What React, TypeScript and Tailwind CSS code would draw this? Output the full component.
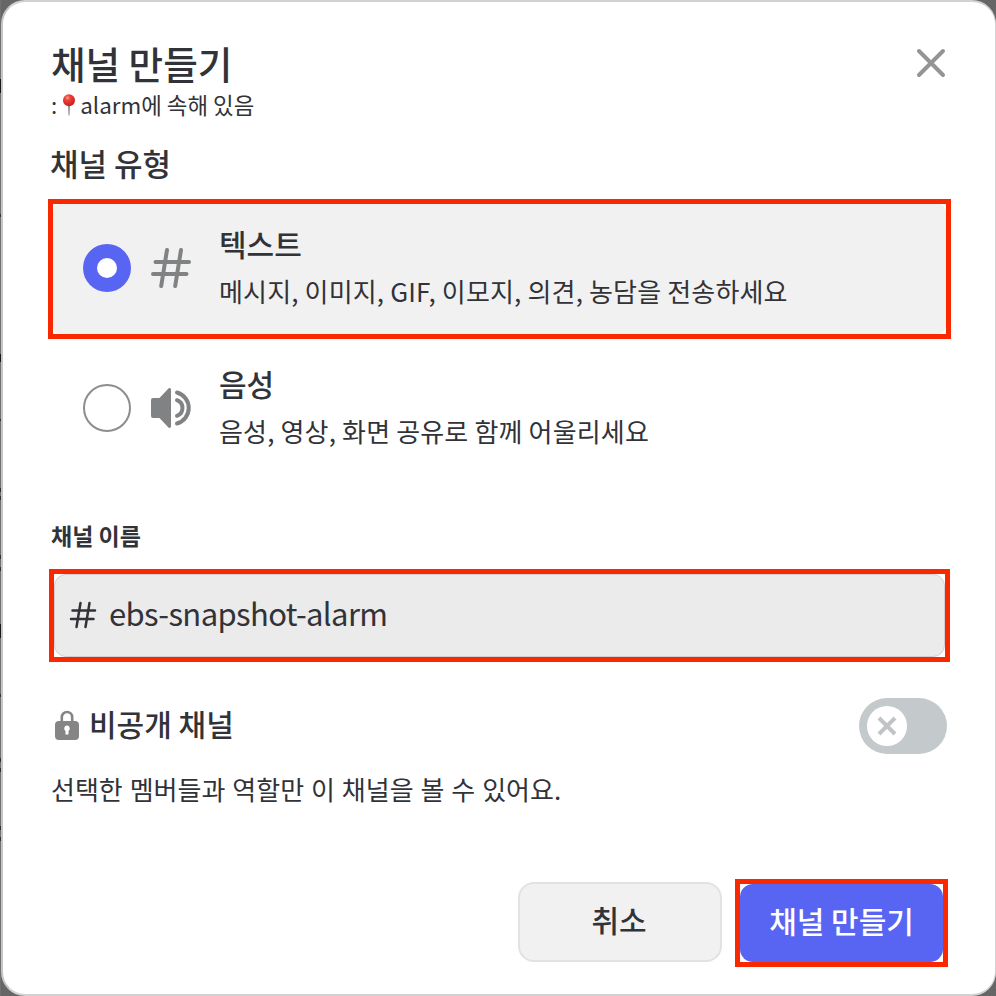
import React from "react";

function Pushpin() {
  return (
    <svg width="14" height="22" viewBox="0 0 14 22" className="ml-[5px] mr-[4px] mt-[5px] shrink-0">
      <defs>
        <radialGradient id="pin" cx="0.38" cy="0.3" r="0.75">
          <stop offset="0" stopColor="#ff9a8c" />
          <stop offset="0.3" stopColor="#ee4138" />
          <stop offset="1" stopColor="#c41d1d" />
        </radialGradient>
      </defs>
      <path d="M6 11h2l-.5 10.500h-1z" fill="#8d8d90" />
      <circle cx="7" cy="6.200" r="6" fill="url(#pin)" />
    </svg>
  );
}

function CloseIcon() {
  return (
    <svg width="30" height="30" viewBox="0 0 30 30" className="shrink-0">
      <path d="M3 3 27 27M27 3 3 27" stroke="#949494" strokeWidth="4" strokeLinecap="round" />
    </svg>
  );
}

function HashIcon() {
  return (
    <svg width="40" height="40" viewBox="0 0 40 40" fill="none" stroke="#808284" strokeWidth="4" strokeLinecap="round">
      <path d="M4.500 14H38M2 26H35.500M16 2 10.200 38M30 2 24.200 38" />
    </svg>
  );
}

function SpeakerIcon() {
  return (
    <svg width="40" height="40" viewBox="0 0 40 40" fill="none" className="overflow-visible">
      <path d="M0 12a2 2 0 0 1 2-2h6.500L17.200.700C18.400-.5 20 .2 20 1.800v36.400c0 1.600-1.600 2.300-2.800 1.100L8.500 30H2a2 2 0 0 1-2-2z" fill="#808284" />
      <path d="M26 12.200a8.300 8.300 0 0 1 0 15.600M26 4.500a16.100 16.100 0 0 1 0 31" stroke="#808284" strokeWidth="4" strokeLinecap="round" />
    </svg>
  );
}

function LockIcon() {
  return (
    <svg width="24" height="30" viewBox="0 0 24 30" fill="none">
      <path d="M6.800 13V7.200a5.200 5.200 0 0 1 10.400 0V13" stroke="#858585" strokeWidth="2.600" />
      <rect y="11" width="24" height="19" rx="4" fill="#858585" />
      <path d="M12 15.500a3 3 0 0 1 1.500 5.500v3.500h-3V21A3 3 0 0 1 12 15.500z" fill="#fff" />
    </svg>
  );
}

/* Slivers of the dimmed page that show beside the dialog. */
function PageEdge() {
  return (
    <div className="h-[996px] w-px shrink-0 bg-[#707070]">
      <div className="h-[79px]" />
      <div className="h-[14px] bg-[#161616]" />
      <div className="h-[121px]" />
      <div className="h-[3px] bg-[#303030]" />
      <div className="h-[137px]" />
      <div className="h-[8px] bg-[#161616]" />
      <div className="h-[57px]" />
      <div className="h-[2px] bg-[#303030]" />
      <div className="h-[67px]" />
      <div className="h-[12px] border-y-4 border-[#303030]" />
      <div className="h-[55px]" />
      <div className="h-[16px] border-y-4 border-[#303030]" />
      <div className="h-[53px]" />
      <div className="h-[14px] bg-[#161616]" />
      <div className="h-[56px]" />
      <div className="h-[3px] bg-[#303030]" />
      <div className="h-[61px]" />
      <div className="h-[14px] border-y-4 border-[#303030]" />
      <div className="h-[54px]" />
      <div className="h-[15px] border-y-4 border-[#303030]" />
    </div>
  );
}

type OptionProps = { icon: React.ReactNode; title: string; text: string; selected?: boolean };

function Option({ icon, title, text, selected }: OptionProps) {
  return (
    <div className="flex h-[130px] items-center pl-[30px]">
      {selected ? (
        <span className="flex size-12 items-center justify-center rounded-full bg-[#5865f2]">
          <span className="size-5 rounded-full bg-white" />
        </span>
      ) : (
        <span className="size-12 rounded-full border-2 border-[#8d8d8f] bg-white" />
      )}
      <span className="ml-5 w-10 shrink-0">{icon}</span>
      <div className="ml-[28px] pb-px">
        <div className="h-[46px] whitespace-nowrap text-[30px] font-medium leading-[40px]">{title}</div>
        <div className="h-[44px] whitespace-nowrap text-[26px] leading-[44px] tracking-[0.16px]">{text}</div>
      </div>
    </div>
  );
}

export default function App() {
  return (
    <div className="flex h-[996px] w-[996px] overflow-hidden bg-[#666666] font-['Noto_Sans_CJK_KR',sans-serif] text-[#313338]">
      <PageEdge />
      <div className="flex h-[996px] w-[995px] flex-col rounded-[24px] border-2 border-r border-[#d2d2d2] border-l-[#c6c6c6] bg-white pl-[45px] pr-[44px]">
        <header className="flex h-[119px] justify-between pl-[3px] pt-[36px]">
          <div>
            <h1 className="h-[51px] whitespace-nowrap text-[37.600px] font-medium leading-[50px]">채널 만들기</h1>
            <p className="flex h-[30px] whitespace-nowrap text-[22.400px] leading-[30px]">
              :<Pushpin />
              <span>alarm에 속해 있음</span>
            </p>
          </div>
          <button className="mr-[5px] mt-[10px] h-[30px]">
            <CloseIcon />
          </button>
        </header>

        <h2 className="ml-[2px] mt-[22px] h-[40px] whitespace-nowrap text-[31px] font-medium leading-[40px]">채널 유형</h2>
        <div className="mt-[16px] h-[140px] w-[903px] border-[5px] border-[#fa2800] bg-white">
          <div className="flow-root h-[130px] rounded-[8px] bg-[#f1f1f1]">
            <div className="-mt-px">
              <Option selected icon={<HashIcon />} title="텍스트" text="메시지, 이미지, GIF, 이모지, 의견, 농담을 전송하세요" />
            </div>
          </div>
        </div>
        <div className="mt-[4px] pl-[5px]">
          <Option icon={<SpeakerIcon />} title="음성" text="음성, 영상, 화면 공유로 함께 어울리세요" />
        </div>

        <label className="ml-[3px] mt-[47px] h-[30px] whitespace-nowrap text-[23px] font-bold leading-[30px]">채널 이름</label>
        <div className="ml-px mt-[19px] h-[93px] w-[901px] border-[5px] border-[#fa2800] bg-white">
          <div className="flex h-full items-center rounded-[12px] border border-[#cfcfcf] bg-[#ebebeb] pb-[2px] pl-[14px]">
            <svg width="28" height="28" viewBox="0 0 28 28" fill="none" stroke="#313338" strokeWidth="2.500" strokeLinecap="round">
              <path d="M3.500 9.500H26M2 18H24.500M11.500 2 7.500 26M20.500 2 16.500 26" />
            </svg>
            <span className="ml-[12px] pb-[3px] text-[31px] leading-[40px] tracking-[-0.620px]">ebs-snapshot-alarm</span>
          </div>
        </div>

        <div className="mt-[36px] flex h-[56px] items-center justify-between pl-[7px]">
          <div className="flex items-center pb-[2px]">
            <LockIcon />
            <span className="ml-[10px] whitespace-nowrap pb-[4px] text-[30px] font-medium leading-[40px]">비공개 채널</span>
          </div>
          <button className="mr-[4px] flex h-[56px] w-[88px] items-center rounded-full bg-[#c4c9cc] pl-[8px]">
            <span className="flex size-10 items-center justify-center rounded-full bg-white">
              <svg width="20" height="20" viewBox="0 0 20 20">
                <path d="M2 2 18 18M18 2 2 18" stroke="#c0c4c6" strokeWidth="4" />
              </svg>
            </span>
          </button>
        </div>
        <p className="ml-[3px] mt-[15px] h-[40px] whitespace-nowrap text-[26px] leading-[40px] [word-spacing:1.100px]">선택한 멤버들과 역할만 이 채널을 볼 수 있어요.</p>

        <footer className="mt-[70px] flex items-start justify-end pr-[3px]">
          <button className="mr-[13px] mt-[3px] h-[80px] w-[204px] rounded-[16px] border-2 border-[#e2e2e3] bg-[#f1f1f1] pb-[7px] pr-[2px] text-[30px] font-medium leading-[40px]">취소</button>
          <div className="h-[88px] w-[213px] border-[5px] border-[#fa2800] bg-white">
            <button className="h-full w-full whitespace-nowrap rounded-[13px] bg-[#5865f2] pb-[7px] text-[30px] font-medium leading-[40px] text-white">채널 만들기</button>
          </div>
        </footer>
      </div>
    </div>
  );
}
